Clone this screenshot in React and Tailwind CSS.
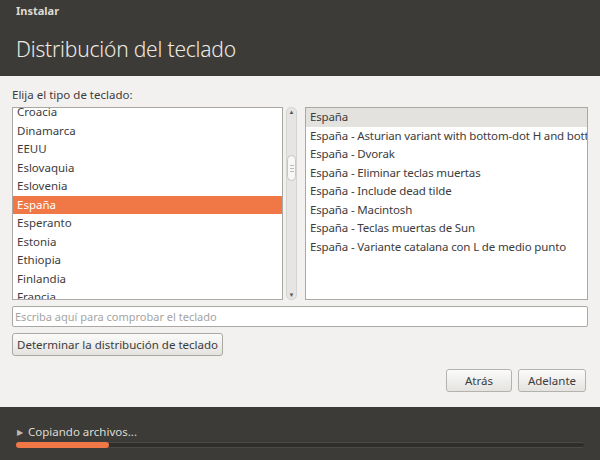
const countries = [
  'Croacia',
  'Dinamarca',
  'EEUU',
  'Eslovaquia',
  'Eslovenia',
  'España',
  'Esperanto',
  'Estonia',
  'Ethiopia',
  'Finlandia',
  'Francia',
];

const variants = [
  'España',
  'España - Asturian variant with bottom-dot H and bottom-dot L',
  'España - Dvorak',
  'España - Eliminar teclas muertas',
  'España - Include dead tilde',
  'España - Macintosh',
  'España - Teclas muertas de Sun',
  'España - Variante catalana con L de medio punto',
];

export default function App() {
  return (
    <div
      className="w-[600px] h-[460px] flex flex-col bg-[#f2f1f0] text-[#3c3c3c] overflow-hidden"
      style={{ fontFamily: '"Noto Sans", "Liberation Sans", sans-serif' }}
    >
      <header className="h-[76px] bg-[#3c3b37] px-4 pt-[2px] flex flex-col">
        <div className="text-[11px] font-bold text-[#dfdbd2] leading-[18px]">Instalar</div>
        <h1 className="mt-[16px] text-[21px] font-light text-[#eeeae3] leading-[26px] tracking-[-0.2px]">
          Distribución del teclado
        </h1>
      </header>

      <main className="flex-1 flex flex-col px-3 pt-[11px]">
        <div className="text-[11.5px] leading-[16px] mb-[4px]">Elija el tipo de teclado:</div>

        <div className="flex h-[193px]">
          <div className="w-[271px] border border-[#a9a8a5] bg-white overflow-hidden">
            <ul className="-mt-[5px]">
              {countries.map((c) => (
                <li
                  key={c}
                  className={
                    'h-[18.5px] pl-[4px] text-[11.5px] leading-[18.5px] ' +
                    (c === 'España' ? 'bg-[#f07746] text-white' : '')
                  }
                >
                  {c}
                </li>
              ))}
            </ul>
          </div>

          <div className="ml-[3px] w-[11px] flex flex-col items-center rounded-[5px] border border-[#d5d4d1] bg-[#e6e5e3]">
            <span className="text-[6px] leading-[8px] text-[#555]">▲</span>
            <div className="flex-1 w-full relative">
              <div className="absolute left-0 right-0 top-[39px] h-[26px] rounded-[5px] border border-[#c8c7c4] bg-[#f7f7f6] flex flex-col items-center justify-center gap-[2px]">
                <span className="w-[4px] h-px bg-[#bbb]" />
                <span className="w-[4px] h-px bg-[#bbb]" />
                <span className="w-[4px] h-px bg-[#bbb]" />
              </div>
            </div>
            <span className="text-[6px] leading-[8px] text-[#555]">▼</span>
          </div>

          <div className="ml-[8px] flex-1 border border-[#a9a8a5] bg-white overflow-hidden">
            <ul>
              {variants.map((v, i) => (
                <li
                  key={v}
                  className={
                    'h-[18.5px] pl-[4px] text-[11.5px] leading-[18.5px] tracking-[-0.15px] whitespace-nowrap ' +
                    (i === 0 ? 'bg-[#e3e2df]' : '')
                  }
                >
                  {v}
                </li>
              ))}
            </ul>
          </div>
        </div>

        <div className="mt-[6px] h-[21px] border border-[#a9a8a5] rounded-[2px] bg-white px-[2px] text-[11px] leading-[19px] text-[#a5a4a1]">
          Escriba aquí para comprobar el teclado
        </div>

        <div className="mt-[6px] flex">
          <button className="h-[23px] px-[4px] border border-[#a9a8a5] rounded-[3px] bg-gradient-to-b from-[#fbfbfa] to-[#e4e3e0] text-[11.5px] leading-[21px] text-[#3c3c3c]">
            Determinar la distribución de teclado
          </button>
        </div>

        <div className="mt-[13px] flex justify-end gap-[6px] pr-[2px]">
          <button className="w-[66px] h-[23px] border border-[#b3b2af] rounded-[3px] bg-gradient-to-b from-[#fbfbfa] to-[#e4e3e0] text-[11.5px] leading-[21px] text-[#3c3c3c]">
            Atrás
          </button>
          <button className="w-[68px] h-[23px] border border-[#b3b2af] rounded-[3px] bg-gradient-to-b from-[#fbfbfa] to-[#e4e3e0] text-[11.5px] leading-[21px] text-[#3c3c3c]">
            Adelante
          </button>
        </div>
      </main>

      <footer className="h-[53px] bg-[#3c3b37] px-4 pt-[17px]">
        <div className="flex items-center gap-[5px] text-[11.5px] leading-[16px] text-[#dfdbd2]">
          <span className="text-[8px] text-[#bdb9b0] pl-[1px]">▶</span>
          <span>Copiando archivos...</span>
        </div>
        <div className="mt-[2px] h-[6px] w-[568px] rounded-full bg-[#2f2e2b] border-y border-[#4a4945]">
          <div className="h-[6px] -mt-px w-[93px] rounded-full bg-[#f07746]" />
        </div>
      </footer>
    </div>
  );
}
